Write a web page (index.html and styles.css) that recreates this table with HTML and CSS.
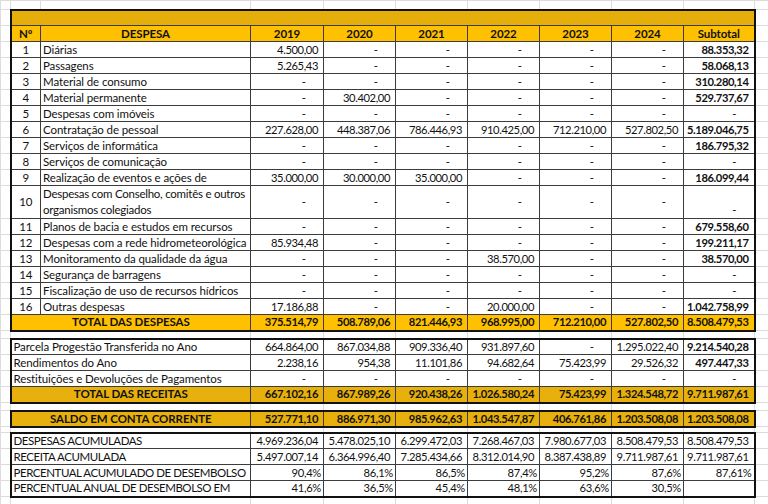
FILE: index.html
```html
<!DOCTYPE html>
<html lang="pt-BR">
<head>
<meta charset="utf-8">
<title>Despesas e Receitas</title>
<link rel="stylesheet" href="styles.css">
</head>
<body>
<table class="sheet">
  <colgroup>
    <col class="c-a"><col class="c-n"><col class="c-d">
    <col class="c-y1"><col class="c-y"><col class="c-y"><col class="c-y"><col class="c-y"><col class="c-y">
    <col class="c-s"><col class="c-z">
  </colgroup>
  <tbody>
    <tr class="grid-row top"><td class="g"></td><td class="g"></td><td class="g"></td><td class="g"></td><td class="g"></td><td class="g"></td><td class="g"></td><td class="g"></td><td class="g"></td><td class="g"></td><td class="g"></td></tr>

    <tr class="r title"><td class="g"></td><td colspan="9" class="t tl tr tt"></td><td class="g"></td></tr>
    <tr class="r head"><td class="g"></td><td class="c tl">Nº</td><td class="c">DESPESA</td><td class="c">2019</td><td class="c">2020</td><td class="c">2021</td><td class="c">2022</td><td class="c">2023</td><td class="c">2024</td><td class="c tr">Subtotal</td><td class="g"></td></tr>

    <tr class="r"><td class="g"></td><td class="c tl">1</td><td class="l">Diárias</td><td class="n">4.500,00</td><td class="d">-</td><td class="d">-</td><td class="d">-</td><td class="d">-</td><td class="d">-</td><td class="n b tr">88.353,32</td><td class="g"></td></tr>
    <tr class="r"><td class="g"></td><td class="c tl">2</td><td class="l">Passagens</td><td class="n">5.265,43</td><td class="d">-</td><td class="d">-</td><td class="d">-</td><td class="d">-</td><td class="d">-</td><td class="n b tr">58.068,13</td><td class="g"></td></tr>
    <tr class="r"><td class="g"></td><td class="c tl">3</td><td class="l">Material de consumo</td><td class="d">-</td><td class="d">-</td><td class="d">-</td><td class="d">-</td><td class="d">-</td><td class="d">-</td><td class="n b tr">310.280,14</td><td class="g"></td></tr>
    <tr class="r"><td class="g"></td><td class="c tl">4</td><td class="l">Material permanente</td><td class="d">-</td><td class="n">30.402,00</td><td class="d">-</td><td class="d">-</td><td class="d">-</td><td class="d">-</td><td class="n b tr">529.737,67</td><td class="g"></td></tr>
    <tr class="r"><td class="g"></td><td class="c tl">5</td><td class="l">Despesas com imóveis</td><td class="d">-</td><td class="d">-</td><td class="d">-</td><td class="d">-</td><td class="d">-</td><td class="d">-</td><td class="d tr">-</td><td class="g"></td></tr>
    <tr class="r"><td class="g"></td><td class="c tl">6</td><td class="l">Contratação de pessoal</td><td class="n">227.628,00</td><td class="n">448.387,06</td><td class="n">786.446,93</td><td class="n">910.425,00</td><td class="n">712.210,00</td><td class="n">527.802,50</td><td class="n b tr">5.189.046,75</td><td class="g"></td></tr>
    <tr class="r"><td class="g"></td><td class="c tl">7</td><td class="l">Serviços de informática</td><td class="d">-</td><td class="d">-</td><td class="d">-</td><td class="d">-</td><td class="d">-</td><td class="d">-</td><td class="n b tr">186.795,32</td><td class="g"></td></tr>
    <tr class="r"><td class="g"></td><td class="c tl">8</td><td class="l">Serviços de comunicação</td><td class="d">-</td><td class="d">-</td><td class="d">-</td><td class="d">-</td><td class="d">-</td><td class="d">-</td><td class="d tr">-</td><td class="g"></td></tr>
    <tr class="r"><td class="g"></td><td class="c tl">9</td><td class="l">Realização de eventos e ações de</td><td class="n">35.000,00</td><td class="n">30.000,00</td><td class="n">35.000,00</td><td class="d">-</td><td class="d">-</td><td class="d">-</td><td class="n b tr">186.099,44</td><td class="g"></td></tr>
    <tr class="r tall"><td class="g"></td><td class="c tl">10</td><td class="l wrap">Despesas com Conselho, comitês e outros organismos colegiados</td><td class="d">-</td><td class="d">-</td><td class="d">-</td><td class="d">-</td><td class="d">-</td><td class="d">-</td><td class="d tr bot">-</td><td class="g"></td></tr>
    <tr class="r"><td class="g"></td><td class="c tl">11</td><td class="l">Planos de bacia e estudos em recursos</td><td class="d">-</td><td class="d">-</td><td class="d">-</td><td class="d">-</td><td class="d">-</td><td class="d">-</td><td class="n b tr">679.558,60</td><td class="g"></td></tr>
    <tr class="r"><td class="g"></td><td class="c tl">12</td><td class="l">Despesas com a rede hidrometeorológica</td><td class="n">85.934,48</td><td class="d">-</td><td class="d">-</td><td class="d">-</td><td class="d">-</td><td class="d">-</td><td class="n b tr">199.211,17</td><td class="g"></td></tr>
    <tr class="r"><td class="g"></td><td class="c tl">13</td><td class="l">Monitoramento da qualidade da água</td><td class="d">-</td><td class="d">-</td><td class="d">-</td><td class="n">38.570,00</td><td class="d">-</td><td class="d">-</td><td class="n b tr">38.570,00</td><td class="g"></td></tr>
    <tr class="r"><td class="g"></td><td class="c tl">14</td><td class="l">Segurança de barragens</td><td class="d">-</td><td class="d">-</td><td class="d">-</td><td class="d">-</td><td class="d">-</td><td class="d">-</td><td class="d tr">-</td><td class="g"></td></tr>
    <tr class="r"><td class="g"></td><td class="c tl">15</td><td class="l">Fiscalização de uso de recursos hídricos</td><td class="d">-</td><td class="d">-</td><td class="d">-</td><td class="d">-</td><td class="d">-</td><td class="d">-</td><td class="d tr">-</td><td class="g"></td></tr>
    <tr class="r"><td class="g"></td><td class="c tl">16</td><td class="l">Outras despesas</td><td class="n">17.186,88</td><td class="d">-</td><td class="d">-</td><td class="n">20.000,00</td><td class="d">-</td><td class="d">-</td><td class="n b tr">1.042.758,99</td><td class="g"></td></tr>
    <tr class="r total bright tb"><td class="g"></td><td colspan="2" class="c tl">TOTAL DAS DESPESAS</td><td class="n">375.514,79</td><td class="n">508.789,06</td><td class="n">821.446,93</td><td class="n">968.995,00</td><td class="n">712.210,00</td><td class="n">527.802,50</td><td class="n tr">8.508.479,53</td><td class="g"></td></tr>

    <tr class="gap"><td class="g"></td><td class="g" colspan="2"></td><td class="g"></td><td class="g"></td><td class="g"></td><td class="g"></td><td class="g"></td><td class="g"></td><td class="g"></td><td class="g"></td></tr>

    <tr class="r tt-row"><td class="g"></td><td colspan="2" class="l2 tl">Parcela Progestão Transferida no Ano</td><td class="n">664.864,00</td><td class="n">867.034,88</td><td class="n">909.336,40</td><td class="n">931.897,60</td><td class="d">-</td><td class="n">1.295.022,40</td><td class="n b tr">9.214.540,28</td><td class="g"></td></tr>
    <tr class="r"><td class="g"></td><td colspan="2" class="l2 tl">Rendimentos do Ano</td><td class="n">2.238,16</td><td class="n">954,38</td><td class="n">11.101,86</td><td class="n">94.682,64</td><td class="n">75.423,99</td><td class="n">29.526,32</td><td class="n b tr">497.447,33</td><td class="g"></td></tr>
    <tr class="r"><td class="g"></td><td colspan="2" class="l2 tl">Restituições e Devoluções de Pagamentos</td><td class="d">-</td><td class="d">-</td><td class="d">-</td><td class="d">-</td><td class="d">-</td><td class="d">-</td><td class="d tr">-</td><td class="g"></td></tr>
    <tr class="r total dark tb"><td class="g"></td><td colspan="2" class="c tl">TOTAL DAS RECEITAS</td><td class="n">667.102,16</td><td class="n">867.989,26</td><td class="n">920.438,26</td><td class="n">1.026.580,24</td><td class="n">75.423,99</td><td class="n">1.324.548,72</td><td class="n tr">9.711.987,61</td><td class="g"></td></tr>

    <tr class="gap"><td class="g"></td><td class="g" colspan="2"></td><td class="g"></td><td class="g"></td><td class="g"></td><td class="g"></td><td class="g"></td><td class="g"></td><td class="g"></td><td class="g"></td></tr>

    <tr class="r total dark tt-row tb"><td class="g"></td><td colspan="2" class="c tl">SALDO EM CONTA CORRENTE</td><td class="n">527.771,10</td><td class="n">886.971,30</td><td class="n">985.962,63</td><td class="n">1.043.547,87</td><td class="n">406.761,86</td><td class="n">1.203.508,08</td><td class="n tr">1.203.508,08</td><td class="g"></td></tr>

    <tr class="gap small"><td class="g"></td><td class="g" colspan="2"></td><td class="g"></td><td class="g"></td><td class="g"></td><td class="g"></td><td class="g"></td><td class="g"></td><td class="g"></td><td class="g"></td></tr>

    <tr class="r tt-row"><td class="g"></td><td colspan="2" class="l2 up tl">DESPESAS ACUMULADAS</td><td class="n">4.969.236,04</td><td class="n">5.478.025,10</td><td class="n">6.299.472,03</td><td class="n">7.268.467,03</td><td class="n">7.980.677,03</td><td class="n">8.508.479,53</td><td class="n tr">8.508.479,53</td><td class="g"></td></tr>
    <tr class="r"><td class="g"></td><td colspan="2" class="l2 up tl">RECEITA ACUMULADA</td><td class="n">5.497.007,14</td><td class="n">6.364.996,40</td><td class="n">7.285.434,66</td><td class="n">8.312.014,90</td><td class="n">8.387.438,89</td><td class="n">9.711.987,61</td><td class="n tr">9.711.987,61</td><td class="g"></td></tr>
    <tr class="r"><td class="g"></td><td colspan="2" class="l2 up tl">PERCENTUAL ACUMULADO DE DESEMBOLSO</td><td class="p">90,4%</td><td class="p">86,1%</td><td class="p">86,5%</td><td class="p">87,4%</td><td class="p">95,2%</td><td class="p">87,6%</td><td class="p tr">87,61%</td><td class="g"></td></tr>
    <tr class="r tb"><td class="g"></td><td colspan="2" class="l2 up tl">PERCENTUAL ANUAL DE DESEMBOLSO EM</td><td class="p">41,6%</td><td class="p">36,5%</td><td class="p">45,4%</td><td class="p">48,1%</td><td class="p">63,6%</td><td class="p">30,5%</td><td class="p tr"></td><td class="g"></td></tr>

    <tr class="grid-row bottom"><td class="g"></td><td class="g" colspan="2"></td><td class="g"></td><td class="g"></td><td class="g"></td><td class="g"></td><td class="g"></td><td class="g"></td><td class="g"></td><td class="g"></td></tr>
  </tbody>
</table>
</body>
</html>
```
FILE: styles.css
```css
html, body {
  margin: 0;
  padding: 0;
  background: #ffffff;
}

body {
  width: 768px;
  height: 504px;
  overflow: hidden;
  font-family: Lato, "Open Sans", sans-serif;
  font-size: 11.5px;
  letter-spacing: -0.1px;
  color: #111111;
}

.sheet {
  border-collapse: collapse;
  table-layout: fixed;
  width: 768px;
}

.c-a { width: 10px; }
.c-n { width: 30px; }
.c-d { width: 210px; }
.c-y1 { width: 73px; }
.c-y { width: 72px; }
.c-s { width: 71px; }
.c-z { width: 14px; }

.sheet td {
  padding: 0 3px;
  height: 16px;
  line-height: 14px;
  white-space: nowrap;
  overflow: hidden;
  vertical-align: middle;
  box-sizing: border-box;
}

.r td {
  border: 1px solid #3c3c3c;
}

.sheet td.g {
  border: 1px solid #dcdcdc;
  padding: 0;
}

.grid-row td { height: 9px; }
.gap td { height: 8px; }
.gap.small td { height: 6px; }

.sheet td.tl { border-left: 2px solid #111; }
.sheet td.tr { border-right: 2px solid #111; }
.sheet td.tt { border-top: 2px solid #111; }
.tt-row td:not(.g) { border-top: 2px solid #111; }
.tb td:not(.g) { border-bottom: 2px solid #111; }

.title td.t { background: #e5ae0b; }
.head td:not(.g) {
  background: #ffc000;
  font-weight: 700;
}

.total td:not(.g) { font-weight: 700; }
.bright td:not(.g) { background: #ffc000; }
.dark td:not(.g) { background: #e7b00d; }

.c { text-align: center; }
.l { text-align: left; padding-left: 2px !important; }
.l2 { text-align: left; padding-left: 2px !important; }
.up { letter-spacing: -0.45px; }
.n {
  text-align: right;
  padding-right: 5px !important;
  font-size: 11.2px;
  letter-spacing: -0.4px;
}
.d { text-align: right; padding-right: 17px !important; }
.p {
  text-align: right;
  padding-right: 2px !important;
  font-size: 11.2px;
  letter-spacing: -0.3px;
}
.b { font-weight: 700; }

.tall td { height: 32px; }
.wrap {
  white-space: normal !important;
  line-height: 16px !important;
  letter-spacing: -0.25px;
  padding-right: 0 !important;
}
.bot { vertical-align: bottom !important; padding-bottom: 1px !important; }
```
